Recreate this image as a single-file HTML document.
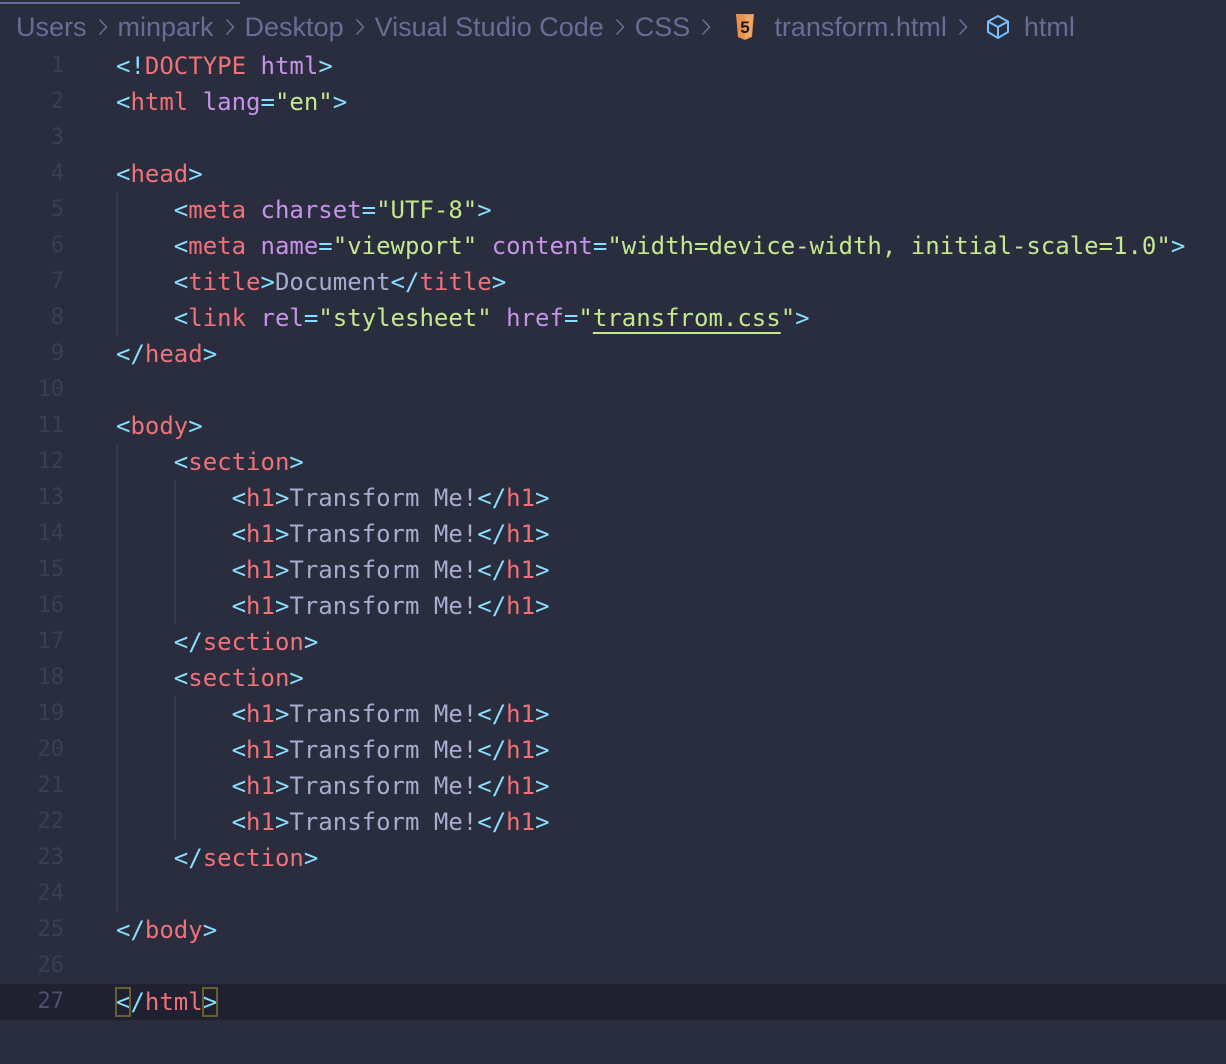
<!DOCTYPE html>
<html><head><meta charset="utf-8"><style>
*{margin:0;padding:0;box-sizing:border-box}
body{width:1226px;height:1064px;background:#292d3e;position:relative;overflow:hidden;font-family:"DejaVu Sans Mono","Liberation Mono",monospace;}
.topbar{position:absolute;left:0;top:2px;width:240px;height:2px;background:#676e95}
.crumb{position:absolute;left:16px;top:10px;height:34px;font-family:"Liberation Sans",sans-serif;font-size:27px;color:#676e95;white-space:nowrap;display:flex;align-items:center}
.crumb .sep{margin:0 10px 0 11px;display:inline-block}
.ln{position:absolute;left:0;width:64px;text-align:right;color:#3a3f58;font-size:22px;height:36px;line-height:36px}
.code{position:absolute;left:116px;font-size:24px;height:36px;line-height:36px;white-space:pre;color:#a6accd}
.cur{position:absolute;left:0;top:984px;width:1226px;height:36px;background:#1f2130}
.g{position:absolute;width:2px;background:#363a4f}
.b{color:#89ddff}.t{color:#f07178}.a{color:#c792ea}.s{color:#c3e88d}
.u{text-decoration:underline;text-decoration-thickness:2px;text-underline-offset:6px}
.box{outline:2px solid #6b5e2e;outline-offset:-1px}
</style></head><body>
<div class="topbar"></div>
<div class="crumb">Users<svg class="sep" width="10" height="18" viewBox="0 0 10 18"><path d="M1.5 1.5L8.5 9L1.5 16.5" fill="none" stroke="#676e95" stroke-width="1.6"/></svg>minpark<svg class="sep" width="10" height="18" viewBox="0 0 10 18"><path d="M1.5 1.5L8.5 9L1.5 16.5" fill="none" stroke="#676e95" stroke-width="1.6"/></svg>Desktop<svg class="sep" width="10" height="18" viewBox="0 0 10 18"><path d="M1.5 1.5L8.5 9L1.5 16.5" fill="none" stroke="#676e95" stroke-width="1.6"/></svg>Visual Studio Code<svg class="sep" width="10" height="18" viewBox="0 0 10 18"><path d="M1.5 1.5L8.5 9L1.5 16.5" fill="none" stroke="#676e95" stroke-width="1.6"/></svg>CSS<svg class="sep" width="10" height="18" viewBox="0 0 10 18"><path d="M1.5 1.5L8.5 9L1.5 16.5" fill="none" stroke="#676e95" stroke-width="1.6"/></svg>
<svg width="20" height="26" viewBox="0 0 20 26" style="margin:0 19px 0 14px"><path d="M1 0h18l-2 23-7 3-7-3z" fill="#e8914d"/><path d="M10 1h8l-1.8 21L10 24.5z" fill="#f0a868"/><text x="10" y="19" font-family="Liberation Sans" font-weight="bold" font-size="17" text-anchor="middle" fill="#1a1a1a">5</text></svg>transform.html<svg class="sep" width="10" height="18" viewBox="0 0 10 18"><path d="M1.5 1.5L8.5 9L1.5 16.5" fill="none" stroke="#676e95" stroke-width="1.6"/></svg>
<svg width="24" height="26" viewBox="0 0 24 26" style="margin:0 14px 0 8px" fill="none" stroke="#75beff" stroke-width="2" stroke-linejoin="round"><path d="M12 2L22 7.5V18L12 24L2 18V7.5Z"/><path d="M2 7.5L12 13L22 7.5M12 13V24"/></svg>html</div>

<div class="cur"></div>
<div class="g" style="left:116px;top:192px;height:144px"></div>
<div class="g" style="left:116px;top:444px;height:468px"></div>
<div class="g" style="left:174px;top:480px;height:144px"></div>
<div class="g" style="left:174px;top:696px;height:144px"></div>

<div class="ln" style="top:48px">1</div><div class="code" style="top:48px"><span class="b">&lt;!</span><span class="t">DOCTYPE</span> <span class="a">html</span><span class="b">&gt;</span></div>
<div class="ln" style="top:84px">2</div><div class="code" style="top:84px"><span class="b">&lt;</span><span class="t">html</span> <span class="a">lang</span><span class="b">=</span><span class="s">"en"</span><span class="b">&gt;</span></div>
<div class="ln" style="top:120px">3</div>
<div class="ln" style="top:156px">4</div><div class="code" style="top:156px"><span class="b">&lt;</span><span class="t">head</span><span class="b">&gt;</span></div>
<div class="ln" style="top:192px">5</div><div class="code" style="top:192px">    <span class="b">&lt;</span><span class="t">meta</span> <span class="a">charset</span><span class="b">=</span><span class="s">"UTF-8"</span><span class="b">&gt;</span></div>
<div class="ln" style="top:228px">6</div><div class="code" style="top:228px">    <span class="b">&lt;</span><span class="t">meta</span> <span class="a">name</span><span class="b">=</span><span class="s">"viewport"</span> <span class="a">content</span><span class="b">=</span><span class="s">"width=device-width, initial-scale=1.0"</span><span class="b">&gt;</span></div>
<div class="ln" style="top:264px">7</div><div class="code" style="top:264px">    <span class="b">&lt;</span><span class="t">title</span><span class="b">&gt;</span>Document<span class="b">&lt;/</span><span class="t">title</span><span class="b">&gt;</span></div>
<div class="ln" style="top:300px">8</div><div class="code" style="top:300px">    <span class="b">&lt;</span><span class="t">link</span> <span class="a">rel</span><span class="b">=</span><span class="s">"stylesheet"</span> <span class="a">href</span><span class="b">=</span><span class="s">"<span class="u">transfrom.css</span>"</span><span class="b">&gt;</span></div>
<div class="ln" style="top:336px">9</div><div class="code" style="top:336px"><span class="b">&lt;/</span><span class="t">head</span><span class="b">&gt;</span></div>
<div class="ln" style="top:372px">10</div>
<div class="ln" style="top:408px">11</div><div class="code" style="top:408px"><span class="b">&lt;</span><span class="t">body</span><span class="b">&gt;</span></div>
<div class="ln" style="top:444px">12</div><div class="code" style="top:444px">    <span class="b">&lt;</span><span class="t">section</span><span class="b">&gt;</span></div>
<div class="ln" style="top:480px">13</div><div class="code" style="top:480px">        <span class="b">&lt;</span><span class="t">h1</span><span class="b">&gt;</span>Transform Me!<span class="b">&lt;/</span><span class="t">h1</span><span class="b">&gt;</span></div>
<div class="ln" style="top:516px">14</div><div class="code" style="top:516px">        <span class="b">&lt;</span><span class="t">h1</span><span class="b">&gt;</span>Transform Me!<span class="b">&lt;/</span><span class="t">h1</span><span class="b">&gt;</span></div>
<div class="ln" style="top:552px">15</div><div class="code" style="top:552px">        <span class="b">&lt;</span><span class="t">h1</span><span class="b">&gt;</span>Transform Me!<span class="b">&lt;/</span><span class="t">h1</span><span class="b">&gt;</span></div>
<div class="ln" style="top:588px">16</div><div class="code" style="top:588px">        <span class="b">&lt;</span><span class="t">h1</span><span class="b">&gt;</span>Transform Me!<span class="b">&lt;/</span><span class="t">h1</span><span class="b">&gt;</span></div>
<div class="ln" style="top:624px">17</div><div class="code" style="top:624px">    <span class="b">&lt;/</span><span class="t">section</span><span class="b">&gt;</span></div>
<div class="ln" style="top:660px">18</div><div class="code" style="top:660px">    <span class="b">&lt;</span><span class="t">section</span><span class="b">&gt;</span></div>
<div class="ln" style="top:696px">19</div><div class="code" style="top:696px">        <span class="b">&lt;</span><span class="t">h1</span><span class="b">&gt;</span>Transform Me!<span class="b">&lt;/</span><span class="t">h1</span><span class="b">&gt;</span></div>
<div class="ln" style="top:732px">20</div><div class="code" style="top:732px">        <span class="b">&lt;</span><span class="t">h1</span><span class="b">&gt;</span>Transform Me!<span class="b">&lt;/</span><span class="t">h1</span><span class="b">&gt;</span></div>
<div class="ln" style="top:768px">21</div><div class="code" style="top:768px">        <span class="b">&lt;</span><span class="t">h1</span><span class="b">&gt;</span>Transform Me!<span class="b">&lt;/</span><span class="t">h1</span><span class="b">&gt;</span></div>
<div class="ln" style="top:804px">22</div><div class="code" style="top:804px">        <span class="b">&lt;</span><span class="t">h1</span><span class="b">&gt;</span>Transform Me!<span class="b">&lt;/</span><span class="t">h1</span><span class="b">&gt;</span></div>
<div class="ln" style="top:840px">23</div><div class="code" style="top:840px">    <span class="b">&lt;/</span><span class="t">section</span><span class="b">&gt;</span></div>
<div class="ln" style="top:876px">24</div>
<div class="ln" style="top:912px">25</div><div class="code" style="top:912px"><span class="b">&lt;/</span><span class="t">body</span><span class="b">&gt;</span></div>
<div class="ln" style="top:948px">26</div>
<div class="ln" style="top:984px;color:#4b5070">27</div><div class="code" style="top:984px"><span class="b box">&lt;</span><span class="b">/</span><span class="t">html</span><span class="b box">&gt;</span></div>
</body></html>
